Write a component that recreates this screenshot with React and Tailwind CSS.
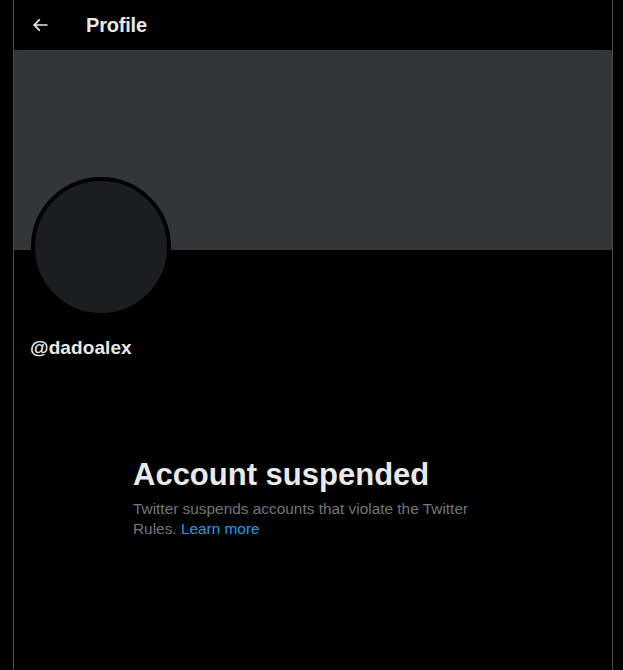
import React from "react";

export default function App() {
  return (
    <div className="w-[623px] h-[670px] bg-black overflow-hidden" style={{ fontFamily: '"Liberation Sans", Arial, sans-serif' }}>
      <div className="ml-[13px] w-[600px] h-[670px] border-x border-[#4a4a4a] flex flex-col">
        <div className="h-[50px] flex items-center">
          <div className="w-[56px] flex justify-center pr-[4px]">
            <svg width="20" height="20" viewBox="0 0 24 24" fill="#e7e9ea">
              <path d="M7.414 13l5.043 5.04-1.414 1.42L3.586 12l7.457-7.46 1.414 1.42L7.414 11H21v2H7.414z" />
            </svg>
          </div>
          <div className="ml-[16px] text-[20px] font-bold text-[#e7e9ea] tracking-[-0.2px]">Profile</div>
        </div>
        <div className="h-[200px] bg-[#333639]" />
        <div className="relative px-4">
          <div className="absolute left-[17px] -top-[73px] w-[140px] h-[140px] rounded-full bg-[#1b1d20] border-[4px] border-black" />
          <div className="pt-[86px] text-[19px] font-bold text-[#e7e9ea] leading-[24px] tracking-[0.1px]">@dadoalex</div>
          <div className="ml-[103px] mt-[97px] w-[350px]">
            <div className="text-[31px] font-bold text-[#e7e9ea] leading-[36px]">Account suspended</div>
            <div className="mt-[6px] text-[15.4px] leading-[20px] text-[#71767b]">
              Twitter suspends accounts that violate the Twitter Rules. <a className="text-[#1d9bf0]">Learn more</a>
            </div>
          </div>
        </div>
      </div>
    </div>
  );
}
